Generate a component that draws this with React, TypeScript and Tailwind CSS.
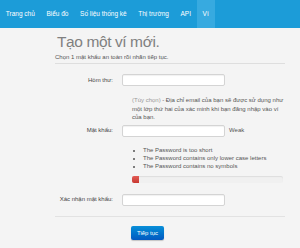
import React from "react";

const navItems = ["Trang chủ", "Biểu đồ", "Số liệu thống kê", "Thị trường", "API", "Ví"];

const Field: React.FC<{ label: string; children?: React.ReactNode }> = ({ label, children }) => (
  <div className="flex items-center">
    <label className="w-[67px] shrink-0 text-right text-[6px] text-[#444] pr-[9px]">{label}</label>
    <div className="w-[103px] h-[12px] shrink-0 bg-white border border-[#d4d4d4] rounded-[2px] shadow-[inset_0_1px_1px_rgba(0,0,0,0.06)]" />
    {children}
  </div>
);

export default function App() {
  return (
    <div className="w-[300px] h-[248px] overflow-hidden bg-[#f4f4f4] font-['Liberation_Sans',Arial,sans-serif]">
      {/* top nav */}
      <nav className="h-[28px] bg-[#1c9cd8] flex items-stretch text-white text-[6.5px]">
        {navItems.map((item) => (
          <div
            key={item}
            className={`flex items-center px-[5.8px] ${item === "Ví" ? "bg-[#37aae0]" : ""}`}
          >
            {item}
          </div>
        ))}
      </nav>

      <div className="ml-[55px] w-[230px]">
        <h1 className="mt-[4px] pl-[2px] text-[15.5px] leading-[20px] text-[#808080] tracking-[-0.4px]">Tạo một ví mới.</h1>
        <p className="mt-[1px] text-[6px] leading-[8px] text-[#555]">Chọn 1 mật khẩu an toàn rồi nhấn tiếp tục.</p>
        <div className="mt-[2px] border-t border-[#dedede]" />

        <div className="mt-[10px]">
          <Field label="Hòm thư:" />
        </div>

        {/* helper text, wrapped as in the original */}
        <div className="mt-[10px] ml-[77px] w-[155px] flex flex-col text-[6px] leading-[8.5px] text-[#555]">
          <div className="flex gap-[1.5px]">
            <span className="text-[#999]">(Tùy chọn)</span>
            <span>- Địa chỉ email của bạn sẽ được sử dụng như</span>
          </div>
          <div>một lớp thứ hai của xác minh khi bạn đăng nhập vào ví</div>
          <div>của bạn.</div>
        </div>

        <div className="mt-[3px]">
          <Field label="Mật khẩu:">
            <span className="ml-[4px] text-[6px] text-[#555]">Weak</span>
          </Field>
        </div>

        <ul className="mt-[9px] ml-[88px] list-disc text-[6px] leading-[8px] text-[#555]">
          <li>The Password is too short</li>
          <li>The Password contains only lower case letters</li>
          <li>The Password contains no symbols</li>
        </ul>

        <div className="mt-[6px] ml-[77px] w-[151px] h-[7px] bg-[#f0f0f0] rounded-[2px] shadow-[inset_0_1px_1px_rgba(0,0,0,0.08)] overflow-hidden">
          <div className="w-[7px] h-full bg-gradient-to-b from-[#e25c55] to-[#c73630]" />
        </div>

        <div className="mt-[11px]">
          <Field label="Xác nhận mật khẩu:" />
        </div>

        <div className="mt-[10px] border-t border-[#e2e2e2]" />

        <div className="mt-[9px] ml-[76px] flex">
          <button className="w-[33px] h-[14px] rounded-[2px] bg-gradient-to-b from-[#0a8fd8] to-[#0558c0] text-white text-[6px] leading-none shadow-[0_1px_1px_rgba(0,0,0,0.2)]">
            Tiếp tục
          </button>
        </div>
      </div>
    </div>
  );
}
